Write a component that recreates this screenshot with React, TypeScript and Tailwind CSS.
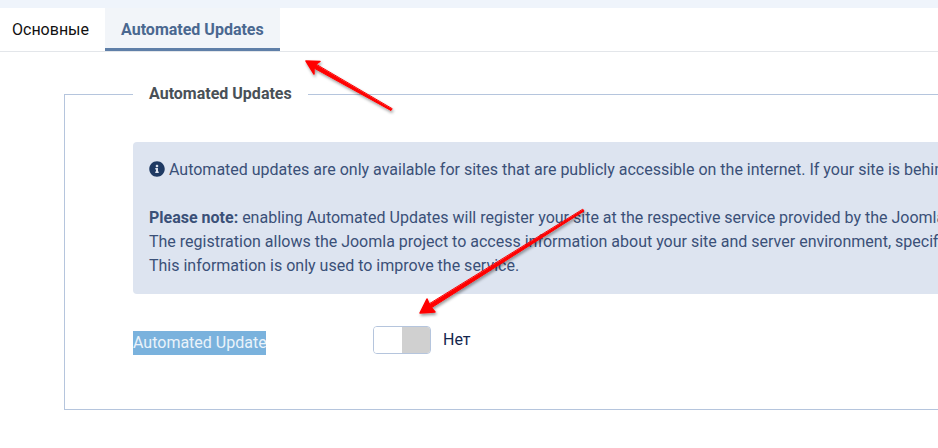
import { FaInfoCircle } from "react-icons/fa";

function Arrows() {
  return (
    <svg className="absolute left-0 top-0 pointer-events-none" width="938" height="448" viewBox="0 0 938 448">
      <defs>
        <filter id="sh" x="-20%" y="-20%" width="140%" height="140%">
          <feDropShadow dx="1" dy="2" stdDeviation="1.4" floodColor="#000" floodOpacity="0.4" />
        </filter>
      </defs>
      <g filter="url(#sh)" fill="#ff0000" stroke="#ff0000" strokeLinejoin="round" strokeLinecap="round">
        <path d="M392 109 L391 110.5 L313 67.5 L315 64 Z" strokeWidth="1" />
        <path d="M306 61 L320 61.5 L314 65.5 L314 74 Z" strokeWidth="1.5" />
        <path d="M583 209.5 L584 211 L431 308 L428 305 Z" strokeWidth="1" />
        <path d="M420 313 L427 299 L430 306 L435 312 Z" strokeWidth="1.5" />
      </g>
    </svg>
  );
}

export default function App() {
  return (
    <div className="relative w-[938px] h-[448px] overflow-hidden bg-white font-['Roboto',sans-serif] text-base leading-6">
      <div className="h-2 bg-[#eff4fb]" />
      <div className="flex h-[44px] border-b border-[#e3e6ea]">
        <div className="flex items-center px-3 text-[#111111]">Основные</div>
        <div className="flex items-center ml-1 px-4 pt-[3px] font-bold text-[#4a6890] bg-[#f2f5f9] border-b-[3px] border-[#5f7fa8]">
          Automated Updates
        </div>
      </div>

      <fieldset className="ml-[64px] mt-[30px] w-[1200px] h-[328px] border border-[#b5c5dd] pl-[68px] pt-[36px]">
        <legend className="px-4 font-bold text-[#495057] leading-6 whitespace-nowrap">Automated Updates</legend>
        <div className="h-[152px] w-[1000px] rounded bg-[#dde4f0] p-4 text-[#3a5078] whitespace-nowrap">
          <div>
            <FaInfoCircle className="inline-block align-[-2px] text-[#1f3a63] text-base" /> Automated updates are only
            available for sites that are publicly accessible on the internet. If your site is behind a firewall
          </div>
          <div className="mt-6">
            <strong className="font-bold">Please note:</strong> enabling Automated Updates will register your site at the
            respective service provided by the Joomla project.
          </div>
          <div>
            The registration allows the Joomla project to access information about your site and server environment,
            specifically
          </div>
          <div>This information is only used to improve the service.</div>
        </div>
        <div className="flex mt-[32px]">
          <div className="w-[240px] pt-[5px]">
            <span className="block w-[133px] overflow-hidden whitespace-nowrap bg-[#7ab2dd] text-[#eaf3fa]">Automated Update</span>
          </div>
          <div className="flex items-start">
            <div className="flex w-[58px] h-[28px] rounded border border-[#b5c5dd] overflow-hidden">
              <div className="w-[28px] bg-white" />
              <div className="flex-1 bg-[#d0d0d0]" />
            </div>
            <span className="ml-3 text-[#14274e] leading-[28px]">Нет</span>
          </div>
        </div>
      </fieldset>
      <Arrows />
    </div>
  );
}
